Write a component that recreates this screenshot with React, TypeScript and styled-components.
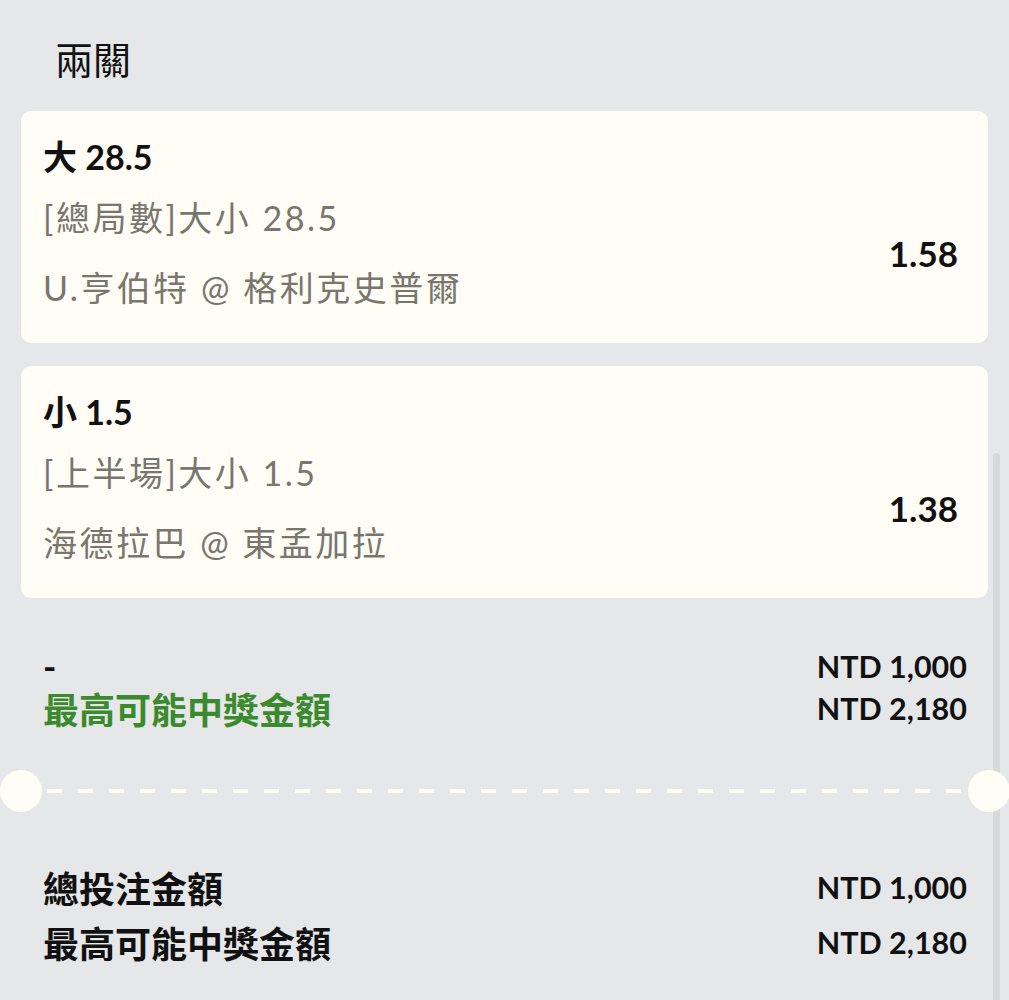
import React from "react";
import styled, { createGlobalStyle } from "styled-components";

const GlobalStyle = createGlobalStyle`
  html, body {
    margin: 0;
    padding: 0;
    background: #e6e7e9;
  }
  body {
    font-family: "Lato", "Noto Sans CJK TC", sans-serif;
    color: #111;
  }
`;

const Page = styled.div`
  position: relative;
  width: 1009px;
  height: 1000px;
  overflow: hidden;
  background: #e6e7e9;
  box-sizing: border-box;
  padding: 0 21px;
`;

const Title = styled.h1`
  margin: 0;
  padding: 37px 0 0 34px;
  height: 111px;
  box-sizing: border-box;
  font-size: 38px;
  line-height: 44px;
  font-weight: 400;
  color: #111;
`;

const CardList = styled.div`
  display: flex;
  flex-direction: column;
  gap: 23px;
`;

const Card = styled.div`
  background: #fffdf5;
  border-radius: 10px;
  height: 232px;
  box-sizing: border-box;
  padding: 26px 30px 0 22px;
  display: flex;
  flex-direction: column;
`;

const Selection = styled.div`
  font-size: 34px;
  font-weight: 700;
  line-height: 40px;
  color: #111;
`;

const DetailRow = styled.div`
  display: flex;
  align-items: center;
  justify-content: space-between;
  margin-top: 21px;
`;

const DetailText = styled.div`
  display: flex;
  flex-direction: column;
  gap: 30px;
`;

const Detail = styled.div`
  font-size: 34px;
  letter-spacing: 2.5px;
  line-height: 40px;
  font-weight: 400;
  color: #77776f;
`;

const Odds = styled.div`
  font-size: 35px;
  line-height: 40px;
  font-weight: 700;
  color: #111;
`;

const Summary = styled.div`
  padding: 47px 21px 0 22px;
  display: flex;
  flex-direction: column;
`;

const SummaryRow = styled.div<{ $h: number }>`
  display: flex;
  justify-content: space-between;
  align-items: center;
  height: ${(p) => p.$h}px;
`;

const Label = styled.div<{ $green?: boolean }>`
  font-size: 36px;
  font-weight: 700;
  color: ${(p) => (p.$green ? "#3b8a2d" : "#111")};
`;

const Amount = styled.div`
  font-size: 30.5px;
  font-weight: 700;
  color: #111;
`;

const Divider = styled.div`
  position: relative;
  height: 42px;
  margin-top: 41px;
  display: flex;
  align-items: center;
  padding: 0 25px 0 26px;
`;

const Dashes = styled.div`
  flex: 1;
  height: 4px;
  background: repeating-linear-gradient(
    to right,
    #fffdf5 0,
    #fffdf5 15px,
    transparent 15px,
    transparent 31px
  );
`;

const Notch = styled.div<{ $side: "left" | "right" }>`
  position: absolute;
  top: 0;
  ${(p) => (p.$side === "left" ? "left: -21px;" : "right: -22px;")}
  width: 42px;
  height: 42px;
  border-radius: 50%;
  background: #fffdf5;
`;

const Totals = styled.div`
  padding: 47px 21px 0 22px;
  display: flex;
  flex-direction: column;
`;

const Scrollbar = styled.div`
  position: absolute;
  top: 453px;
  right: 9px;
  width: 7px;
  bottom: 0;
  background: #d7d8da;
  border-radius: 4px 4px 0 0;
`;

const bets = [
  {
    sel: "大 28.5",
    market: "[總局數]大小 28.5",
    teams: "U.亨伯特 @ 格利克史普爾",
    odds: "1.58",
  },
  {
    sel: "小 1.5",
    market: "[上半場]大小 1.5",
    teams: "海德拉巴 @ 東孟加拉",
    odds: "1.38",
  },
];

export default function App() {
  return (
    <>
      <GlobalStyle />
      <Page>
        <Scrollbar />
        <Title>兩關</Title>
        <CardList>
          {bets.map((b) => (
            <Card key={b.sel}>
              <Selection>{b.sel}</Selection>
              <DetailRow>
                <DetailText>
                  <Detail>{b.market}</Detail>
                  <Detail>{b.teams}</Detail>
                </DetailText>
                <Odds>{b.odds}</Odds>
              </DetailRow>
            </Card>
          ))}
        </CardList>
        <Summary>
          <SummaryRow $h={42}>
            <Label>-</Label>
            <Amount>NTD 1,000</Amount>
          </SummaryRow>
          <SummaryRow $h={42}>
            <Label $green>最高可能中獎金額</Label>
            <Amount>NTD 2,180</Amount>
          </SummaryRow>
        </Summary>
        <Divider>
          <Notch $side="left" />
          <Dashes />
          <Notch $side="right" />
        </Divider>
        <Totals>
          <SummaryRow $h={55}>
            <Label>總投注金額</Label>
            <Amount>NTD 1,000</Amount>
          </SummaryRow>
          <SummaryRow $h={55}>
            <Label>最高可能中獎金額</Label>
            <Amount>NTD 2,180</Amount>
          </SummaryRow>
        </Totals>
      </Page>
    </>
  );
}
